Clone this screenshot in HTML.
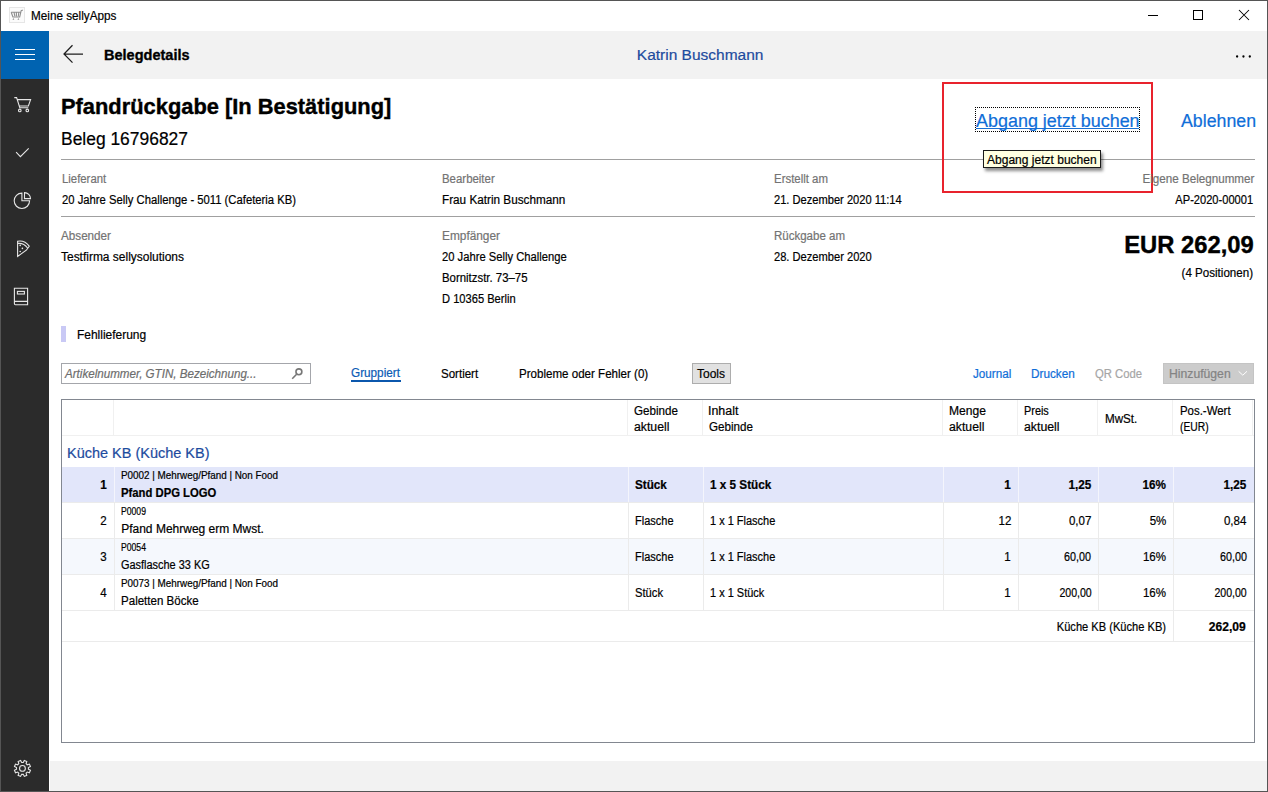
<!DOCTYPE html>
<html><head><meta charset="utf-8">
<style>
*{margin:0;padding:0;box-sizing:border-box}
html,body{width:1268px;height:792px;overflow:hidden;background:#fff;font-family:"Liberation Sans",sans-serif}
.t{position:absolute;white-space:nowrap;line-height:1;font-family:"Liberation Sans",sans-serif;-webkit-text-stroke:0.2px currentColor}
.r{position:absolute}
</style></head><body>
<!-- window frame -->
<div class="r" style="left:0;top:0;width:1268px;height:792px;border:1px solid #555;background:#fff"></div>
<!-- title bar icon -->
<div class="r" style="left:9px;top:7px;width:16px;height:16px;background:#fbfbfb;border:1px solid #e6e6e6"></div>
<svg class="r" style="left:0;top:0" width="1268" height="792" viewBox="0 0 1268 792">
  <!-- app icon cart -->
  <path d="M11.2 12.2 L12.9 17 H19.7 L21.1 10.8 Q21.4 10 23 10.3 M14 12.2 L14.8 16.2 M16.4 12.2 V16.2 M18.8 12.2 L18.3 16.2 M11.2 12.3 H20.5" fill="none" stroke="#8e8e8e" stroke-width="1.1"/>
  <path d="M12.5 19.8 L13.4 18 L14.3 19.8 Z M17.5 19.8 L18.4 18 L19.3 19.8 Z" fill="#8e8e8e"/>
  <!-- window buttons -->
  <rect x="1148" y="15" width="10" height="1" fill="#000"/>
  <rect x="1193.5" y="10.5" width="9" height="9" fill="none" stroke="#000" stroke-width="1"/>
  <path d="M1239 10 L1249 20 M1249 10 L1239 20" stroke="#000" stroke-width="1.05"/>
</svg>
<!-- header -->
<div class="r" style="left:49px;top:31px;width:1218px;height:48px;background:#f2f2f2"></div>
<div class="r" style="left:1px;top:31px;width:48px;height:48px;background:#0063b1"></div>
<div class="r" style="left:1px;top:79px;width:48px;height:712px;background:#2b2b2b"></div>
<div class="r" style="left:50px;top:761px;width:1217px;height:30px;background:#f2f2f2"></div>
<svg class="r" style="left:0;top:0" width="1268" height="792" viewBox="0 0 1268 792">
  <!-- hamburger -->
  <rect x="15" y="49" width="20" height="1" fill="#fff"/>
  <rect x="15" y="54" width="20" height="1" fill="#fff"/>
  <rect x="15" y="59" width="20" height="1" fill="#fff"/>
  <!-- back arrow -->
  <path d="M83 54 H64 M72.5 45.3 L64 54 L72.5 62.6" fill="none" stroke="#1e1e1e" stroke-width="1.25"/>
  <!-- dots -->
  <circle cx="1237.1" cy="56.5" r="1.15" fill="#000"/><circle cx="1243.45" cy="56.5" r="1.15" fill="#000"/><circle cx="1249.8" cy="56.5" r="1.15" fill="#000"/>
  <g fill="none" stroke="#e6e6e6" stroke-width="1.1">
    <!-- cart -->
    <path d="M14.3 97.6 H16.6 L19.8 107.7 H28.3 M17.2 99.6 H30.6 L28.4 106 H19.4"/>
    <circle cx="19.8" cy="110.4" r="1.3"/><circle cx="27.3" cy="110.4" r="1.3"/>
    <!-- check -->
    <path d="M16.1 152.2 L20.4 156.6 L28.7 148.3"/>
    <!-- pie -->
    <path d="M21.9 193.1 A7.7 7.7 0 1 0 29.6 200.8 H21.9 Z"/>
    <path d="M24.5 192.6 A6 6 0 0 1 30.5 198.6 H24.5 Z"/>
    <!-- pizza -->
    <path d="M17.6 256.4 V241.2 Q24.5 239.8 29.2 246.2 L26.3 250.2 Z"/>
    <path d="M18 243.4 Q23.8 242.8 27.6 248"/>
    <!-- book -->
    <path d="M14.4 288.2 H27.6 V304.8 H15.4 Q14.4 304.8 14.4 303.6 Z M14.4 301.4 H27.6"/>
    <rect x="17.4" y="291.4" width="7" height="2.6"/>
    <!-- gear -->
    <circle cx="22.45" cy="768.4" r="2.9"/>
  </g>
  <g fill="#e6e6e6">
    <circle cx="20.2" cy="245.4" r="0.8"/><circle cx="22.4" cy="248.4" r="0.8"/><circle cx="20.2" cy="251.5" r="0.8"/>
  </g>
  <path id="gear" fill="none" stroke="#e6e6e6" stroke-width="1.1" d="M24.30 760.41 L26.79 761.44 L26.09 763.63 L27.22 764.76 L29.41 764.06 L30.44 766.55 L28.40 767.60 L28.40 769.20 L30.44 770.25 L29.41 772.74 L27.22 772.04 L26.09 773.17 L26.79 775.36 L24.30 776.39 L23.25 774.35 L21.65 774.35 L20.60 776.39 L18.11 775.36 L18.81 773.17 L17.68 772.04 L15.49 772.74 L14.46 770.25 L16.50 769.20 L16.50 767.60 L14.46 766.55 L15.49 764.06 L17.68 764.76 L18.81 763.63 L18.11 761.44 L20.60 760.41 L21.65 762.45 L23.25 762.45 Z"/>
</svg>
<!-- dividers -->
<div class="r" style="left:61px;top:159px;width:1194px;height:1px;background:#a0a0a0"></div>
<div class="r" style="left:61px;top:216px;width:1194px;height:1px;background:#a0a0a0"></div>
<!-- link underline & focus -->
<div class="r" style="left:976px;top:128px;width:163px;height:1px;background:#1a6fd4"></div>
<div class="r" style="left:975px;top:107px;width:165px;height:25px;border:1px dotted #000"></div>
<!-- red box -->
<div class="r" style="left:942px;top:82px;width:211px;height:111px;border:2px solid #e8232d"></div>
<!-- tooltip -->
<div class="r" style="left:983px;top:150px;width:118px;height:18px;background:#ffffe1;border:1px solid #1a1a1a;box-shadow:2px 3px 3px rgba(0,0,0,0.45)"></div>
<!-- fehllieferung bar -->
<div class="r" style="left:61px;top:326px;width:5px;height:16px;background:#c9c9f5"></div>
<!-- search -->
<div class="r" style="left:61px;top:363px;width:250px;height:21px;border:1px solid #a4a6ab"></div>
<svg class="r" style="left:0;top:0" width="1268" height="792" viewBox="0 0 1268 792">
  <circle cx="298.9" cy="371.8" r="2.95" fill="none" stroke="#777" stroke-width="1.6"/>
  <path d="M296.6 374.3 L292.2 378.8" stroke="#777" stroke-width="1.6"/>
</svg>
<div class="r" style="left:351px;top:380px;width:50px;height:2px;background:#0b57ad"></div>
<div class="r" style="left:692px;top:363px;width:39px;height:21px;background:#e1e1e1;border:1px solid #adadad"></div>
<div class="r" style="left:1163px;top:363px;width:91px;height:21px;background:#cccccc;border:1px solid #c4c4c4"></div>
<!-- table -->
<div class="r" style="left:61px;top:399px;width:1194px;height:344px;border:1px solid #828790"></div>
<div class="r" style="left:62px;top:435px;width:1192px;height:1px;background:#f0f0f0"></div>
<div class="r" style="left:113px;top:400px;width:1px;height:35px;background:#f0f0f0"></div>
<div class="r" style="left:627px;top:400px;width:1px;height:35px;background:#f0f0f0"></div>
<div class="r" style="left:702px;top:400px;width:1px;height:35px;background:#f0f0f0"></div>
<div class="r" style="left:942px;top:400px;width:1px;height:35px;background:#f0f0f0"></div>
<div class="r" style="left:1017px;top:400px;width:1px;height:35px;background:#f0f0f0"></div>
<div class="r" style="left:1097px;top:400px;width:1px;height:35px;background:#f0f0f0"></div>
<div class="r" style="left:1172px;top:400px;width:1px;height:35px;background:#f0f0f0"></div>
<div class="r" style="left:1252px;top:400px;width:1px;height:35px;background:#f0f0f0"></div>
<div class="r" style="left:62px;top:467px;width:1192px;height:35px;background:#e2e6fa"></div>
<div class="r" style="left:62px;top:539px;width:1192px;height:35px;background:#f5f8fd"></div>
<div class="r" style="left:62px;top:502px;width:1192px;height:1px;background:#ebebeb"></div>
<div class="r" style="left:62px;top:538px;width:1192px;height:1px;background:#ebebeb"></div>
<div class="r" style="left:62px;top:574px;width:1192px;height:1px;background:#ebebeb"></div>
<div class="r" style="left:62px;top:610px;width:1192px;height:1px;background:#ebebeb"></div>
<div class="r" style="left:62px;top:641px;width:1192px;height:1px;background:#ebebeb"></div>
<div class="r" style="left:114px;top:467px;width:1px;height:35px;background:#f4f5fc"></div>
<div class="r" style="left:114px;top:503px;width:1px;height:107px;background:#ebebeb"></div>
<div class="r" style="left:628px;top:467px;width:1px;height:35px;background:#f4f5fc"></div>
<div class="r" style="left:628px;top:503px;width:1px;height:107px;background:#ebebeb"></div>
<div class="r" style="left:703px;top:467px;width:1px;height:35px;background:#f4f5fc"></div>
<div class="r" style="left:703px;top:503px;width:1px;height:107px;background:#ebebeb"></div>
<div class="r" style="left:943px;top:467px;width:1px;height:35px;background:#f4f5fc"></div>
<div class="r" style="left:943px;top:503px;width:1px;height:107px;background:#ebebeb"></div>
<div class="r" style="left:1018px;top:467px;width:1px;height:35px;background:#f4f5fc"></div>
<div class="r" style="left:1018px;top:503px;width:1px;height:107px;background:#ebebeb"></div>
<div class="r" style="left:1098px;top:467px;width:1px;height:35px;background:#f4f5fc"></div>
<div class="r" style="left:1098px;top:503px;width:1px;height:107px;background:#ebebeb"></div>
<div class="r" style="left:1173px;top:467px;width:1px;height:35px;background:#f4f5fc"></div>
<div class="r" style="left:1173px;top:503px;width:1px;height:107px;background:#ebebeb"></div>
<div class="r" style="left:1173px;top:611px;width:1px;height:30px;background:#ebebeb"></div>
<span class="t" style="top:10px;font-size:12px;color:#000;left:30.50px;transform:scaleX(0.9774);transform-origin:left;">Meine sellyApps</span>
<span class="t" style="top:47px;font-size:15.5px;color:#000;font-weight:700;-webkit-text-stroke:0.35px currentColor;left:103.76px;transform:scaleX(0.9365);transform-origin:left;">Belegdetails</span>
<span class="t" style="top:47px;font-size:15.5px;color:#1d4b9e;left:636.80px;">Katrin Buschmann</span>
<span class="t" style="top:96px;font-size:22px;color:#000;font-weight:700;-webkit-text-stroke:0.4px currentColor;left:61.01px;transform:scaleX(0.9935);transform-origin:left;">Pfandrückgabe [In Bestätigung]</span>
<span class="t" style="top:130px;font-size:18px;color:#000;left:60.53px;transform:scaleX(0.9684);transform-origin:left;">Beleg 16796827</span>
<span class="t" style="top:112px;font-size:18px;color:#0f6ed8;left:976.40px;transform:scaleX(0.9968);transform-origin:left;">Abgang jetzt buchen</span>
<span class="t" style="top:112px;font-size:18px;color:#0f6ed8;left:1180.70px;transform:scaleX(0.9859);transform-origin:left;">Ablehnen</span>
<span class="t" style="top:154px;font-size:12px;color:#000;left:987.40px;transform:scaleX(1.0024);transform-origin:left;">Abgang jetzt buchen</span>
<span class="t" style="top:173px;font-size:12px;color:#737373;left:61.70px;transform:scaleX(0.9458);transform-origin:left;">Lieferant</span>
<span class="t" style="top:194px;font-size:12px;color:#000;left:61.50px;transform:scaleX(0.9388);transform-origin:left;">20 Jahre Selly Challenge - 5011 (Cafeteria KB)</span>
<span class="t" style="top:173px;font-size:12px;color:#737373;left:442.00px;transform:scaleX(0.9518);transform-origin:left;">Bearbeiter</span>
<span class="t" style="top:194px;font-size:12px;color:#000;left:442.00px;transform:scaleX(0.9786);transform-origin:left;">Frau Katrin Buschmann</span>
<span class="t" style="top:173px;font-size:12px;color:#737373;left:774.20px;transform:scaleX(0.9527);transform-origin:left;">Erstellt am</span>
<span class="t" style="top:194px;font-size:12px;color:#000;left:774.20px;transform:scaleX(0.9262);transform-origin:left;">21. Dezember 2020 11:14</span>
<span class="t" style="top:173px;font-size:12px;color:#737373;right:13.20px;transform:scaleX(0.9705);transform-origin:right;">Eigene Belegnummer</span>
<span class="t" style="top:194px;font-size:12px;color:#000;right:15.30px;transform:scaleX(0.9243);transform-origin:right;">AP-2020-00001</span>
<span class="t" style="top:230px;font-size:12px;color:#737373;left:61.00px;transform:scaleX(0.9733);transform-origin:left;">Absender</span>
<span class="t" style="top:251px;font-size:12px;color:#000;left:61.00px;transform:scaleX(0.9970);transform-origin:left;">Testfirma sellysolutions</span>
<span class="t" style="top:230px;font-size:12px;color:#737373;left:442.00px;transform:scaleX(0.9880);transform-origin:left;">Empfänger</span>
<span class="t" style="top:251px;font-size:12px;color:#000;left:442.00px;transform:scaleX(0.9346);transform-origin:left;">20 Jahre Selly Challenge</span>
<span class="t" style="top:272px;font-size:12px;color:#000;left:442.00px;transform:scaleX(0.9493);transform-origin:left;">Bornitzstr. 73–75</span>
<span class="t" style="top:293px;font-size:12px;color:#000;left:442.00px;transform:scaleX(0.9275);transform-origin:left;">D 10365 Berlin</span>
<span class="t" style="top:230px;font-size:12px;color:#737373;left:774.20px;transform:scaleX(0.9589);transform-origin:left;">Rückgabe am</span>
<span class="t" style="top:251px;font-size:12px;color:#000;left:774.20px;transform:scaleX(0.9269);transform-origin:left;">28. Dezember 2020</span>
<span class="t" style="top:233px;font-size:24px;color:#000;font-weight:700;-webkit-text-stroke:0.4px currentColor;right:14.66px;transform:scaleX(0.9907);transform-origin:right;">EUR 262,09</span>
<span class="t" style="top:267px;font-size:12px;color:#000;right:15.00px;transform:scaleX(0.9657);transform-origin:right;">(4 Positionen)</span>
<span class="t" style="top:329px;font-size:12px;color:#000;left:76.50px;transform:scaleX(0.9971);transform-origin:left;">Fehllieferung</span>
<span class="t" style="top:368px;font-size:12px;color:#6d6d6d;font-style:italic;left:64.67px;transform:scaleX(0.9669);transform-origin:left;">Artikelnummer, GTIN, Bezeichnung...</span>
<span class="t" style="top:367px;font-size:12px;color:#0b5bb5;left:351.40px;transform:scaleX(0.9785);transform-origin:left;">Gruppiert</span>
<span class="t" style="top:368px;font-size:12px;color:#000;left:441.00px;transform:scaleX(0.9608);transform-origin:left;">Sortiert</span>
<span class="t" style="top:368px;font-size:12px;color:#000;left:519.20px;transform:scaleX(0.9637);transform-origin:left;">Probleme oder Fehler (0)</span>
<span class="t" style="top:368px;font-size:12px;color:#000;left:697.00px;">Tools</span>
<span class="t" style="top:368px;font-size:12px;color:#0f6ed8;left:973.00px;transform:scaleX(0.9744);transform-origin:left;">Journal</span>
<span class="t" style="top:368px;font-size:12px;color:#0f6ed8;left:1031.00px;transform:scaleX(0.9816);transform-origin:left;">Drucken</span>
<span class="t" style="top:368px;font-size:12px;color:#a6a6a6;left:1095.00px;transform:scaleX(0.9415);transform-origin:left;">QR Code</span>
<span class="t" style="top:368px;font-size:12px;color:#838383;left:1168.60px;transform:scaleX(1.0161);transform-origin:left;">Hinzufügen</span>
<span class="t" style="top:405px;font-size:12px;color:#000;left:634.00px;transform:scaleX(0.9673);transform-origin:left;">Gebinde</span>
<span class="t" style="top:421px;font-size:12px;color:#000;left:634.00px;transform:scaleX(1.0229);transform-origin:left;">aktuell</span>
<span class="t" style="top:405px;font-size:12px;color:#000;left:707.77px;transform:scaleX(1.0337);transform-origin:left;">Inhalt</span>
<span class="t" style="top:421px;font-size:12px;color:#000;left:708.80px;transform:scaleX(0.9673);transform-origin:left;">Gebinde</span>
<span class="t" style="top:405px;font-size:12px;color:#000;left:949.20px;transform:scaleX(1.0076);transform-origin:left;">Menge</span>
<span class="t" style="top:421px;font-size:12px;color:#000;left:949.20px;transform:scaleX(1.0199);transform-origin:left;">aktuell</span>
<span class="t" style="top:405px;font-size:12px;color:#000;left:1023.90px;transform:scaleX(0.9071);transform-origin:left;">Preis</span>
<span class="t" style="top:421px;font-size:12px;color:#000;left:1023.90px;transform:scaleX(1.0258);transform-origin:left;">aktuell</span>
<span class="t" style="top:413px;font-size:12px;color:#000;left:1104.70px;transform:scaleX(0.9697);transform-origin:left;">MwSt.</span>
<span class="t" style="top:405px;font-size:12px;color:#000;left:1179.50px;transform:scaleX(0.9519);transform-origin:left;">Pos.-Wert</span>
<span class="t" style="top:421px;font-size:12px;color:#000;left:1179.50px;transform:scaleX(0.8580);transform-origin:left;">(EUR)</span>
<span class="t" style="top:445px;font-size:15.5px;color:#1d4b9e;left:67.27px;transform:scaleX(0.9344);transform-origin:left;">Küche KB (Küche KB)</span>
<span class="t" style="top:479px;font-size:12px;color:#000;font-weight:700;right:1161.52px;transform:scaleX(0.9765);transform-origin:right;">1</span>
<span class="t" style="top:471px;font-size:10px;color:#000;left:121.20px;transform:scaleX(0.9866);transform-origin:left;">P0002 | Mehrweg/Pfand | Non Food</span>
<span class="t" style="top:487px;font-size:12px;color:#000;font-weight:700;left:121.20px;transform:scaleX(0.9406);transform-origin:left;">Pfand DPG LOGO</span>
<span class="t" style="top:479px;font-size:12px;color:#000;font-weight:700;left:634.90px;transform:scaleX(0.9756);transform-origin:left;">Stück</span>
<span class="t" style="top:479px;font-size:12px;color:#000;font-weight:700;left:710.40px;transform:scaleX(0.9774);transform-origin:left;">1 x 5 Stück</span>
<span class="t" style="top:479px;font-size:12px;color:#000;font-weight:700;right:257.12px;transform:scaleX(0.9765);transform-origin:right;">1</span>
<span class="t" style="top:479px;font-size:12px;color:#000;font-weight:700;right:176.72px;transform:scaleX(0.9765);transform-origin:right;">1,25</span>
<span class="t" style="top:479px;font-size:12px;color:#000;font-weight:700;right:101.62px;transform:scaleX(0.9765);transform-origin:right;">16%</span>
<span class="t" style="top:479px;font-size:12px;color:#000;font-weight:700;right:21.32px;transform:scaleX(0.9765);transform-origin:right;">1,25</span>
<span class="t" style="top:515px;font-size:12px;color:#000;right:1161.51px;transform:scaleX(0.9598);transform-origin:right;">2</span>
<span class="t" style="top:507px;font-size:10px;color:#000;left:121.20px;transform:scaleX(0.8619);transform-origin:left;">P0009</span>
<span class="t" style="top:523px;font-size:12px;color:#000;left:121.20px;">Pfand Mehrweg erm Mwst.</span>
<span class="t" style="top:515px;font-size:12px;color:#000;left:634.90px;transform:scaleX(0.9163);transform-origin:left;">Flasche</span>
<span class="t" style="top:515px;font-size:12px;color:#000;left:710.40px;transform:scaleX(0.9150);transform-origin:left;">1 x 1 Flasche</span>
<span class="t" style="top:515px;font-size:12px;color:#000;right:257.11px;transform:scaleX(0.9598);transform-origin:right;">12</span>
<span class="t" style="top:515px;font-size:12px;color:#000;right:176.71px;transform:scaleX(0.9598);transform-origin:right;">0,07</span>
<span class="t" style="top:515px;font-size:12px;color:#000;right:101.62px;transform:scaleX(0.9598);transform-origin:right;">5%</span>
<span class="t" style="top:515px;font-size:12px;color:#000;right:21.31px;transform:scaleX(0.9598);transform-origin:right;">0,84</span>
<span class="t" style="top:551px;font-size:12px;color:#000;right:1161.51px;transform:scaleX(0.9598);transform-origin:right;">3</span>
<span class="t" style="top:543px;font-size:10px;color:#000;left:121.20px;transform:scaleX(0.8619);transform-origin:left;">P0054</span>
<span class="t" style="top:559px;font-size:12px;color:#000;left:121.20px;transform:scaleX(0.9109);transform-origin:left;">Gasflasche 33 KG</span>
<span class="t" style="top:551px;font-size:12px;color:#000;left:634.90px;transform:scaleX(0.9163);transform-origin:left;">Flasche</span>
<span class="t" style="top:551px;font-size:12px;color:#000;left:710.40px;transform:scaleX(0.9150);transform-origin:left;">1 x 1 Flasche</span>
<span class="t" style="top:551px;font-size:12px;color:#000;right:257.11px;transform:scaleX(0.9598);transform-origin:right;">1</span>
<span class="t" style="top:551px;font-size:12px;color:#000;right:176.69px;transform:scaleX(0.8960);transform-origin:right;">60,00</span>
<span class="t" style="top:551px;font-size:12px;color:#000;right:101.62px;transform:scaleX(0.9598);transform-origin:right;">16%</span>
<span class="t" style="top:551px;font-size:12px;color:#000;right:21.29px;transform:scaleX(0.8960);transform-origin:right;">60,00</span>
<span class="t" style="top:587px;font-size:12px;color:#000;right:1161.51px;transform:scaleX(0.9598);transform-origin:right;">4</span>
<span class="t" style="top:579px;font-size:10px;color:#000;left:121.20px;transform:scaleX(0.9866);transform-origin:left;">P0073 | Mehrweg/Pfand | Non Food</span>
<span class="t" style="top:595px;font-size:12px;color:#000;left:121.20px;transform:scaleX(0.9624);transform-origin:left;">Paletten Böcke</span>
<span class="t" style="top:587px;font-size:12px;color:#000;left:634.90px;transform:scaleX(0.9351);transform-origin:left;">Stück</span>
<span class="t" style="top:587px;font-size:12px;color:#000;left:710.40px;transform:scaleX(0.9145);transform-origin:left;">1 x 1 Stück</span>
<span class="t" style="top:587px;font-size:12px;color:#000;right:257.11px;transform:scaleX(0.9598);transform-origin:right;">1</span>
<span class="t" style="top:587px;font-size:12px;color:#000;right:176.69px;transform:scaleX(0.8804);transform-origin:right;">200,00</span>
<span class="t" style="top:587px;font-size:12px;color:#000;right:101.62px;transform:scaleX(0.9598);transform-origin:right;">16%</span>
<span class="t" style="top:587px;font-size:12px;color:#000;right:21.29px;transform:scaleX(0.8804);transform-origin:right;">200,00</span>
<span class="t" style="top:621px;font-size:12px;color:#000;right:102.00px;transform:scaleX(0.9258);transform-origin:right;">Küche KB (Küche KB)</span>
<span class="t" style="top:621px;font-size:12px;color:#000;font-weight:700;right:21.83px;transform:scaleX(1.0073);transform-origin:right;">262,09</span>
<svg class="r" style="left:0;top:0" width="1268" height="792" viewBox="0 0 1268 792">
  <path d="M1238.6 371.3 L1242.8 375.2 L1247 371.3" fill="none" stroke="#fff" stroke-width="1"/>
</svg>
</body></html>
